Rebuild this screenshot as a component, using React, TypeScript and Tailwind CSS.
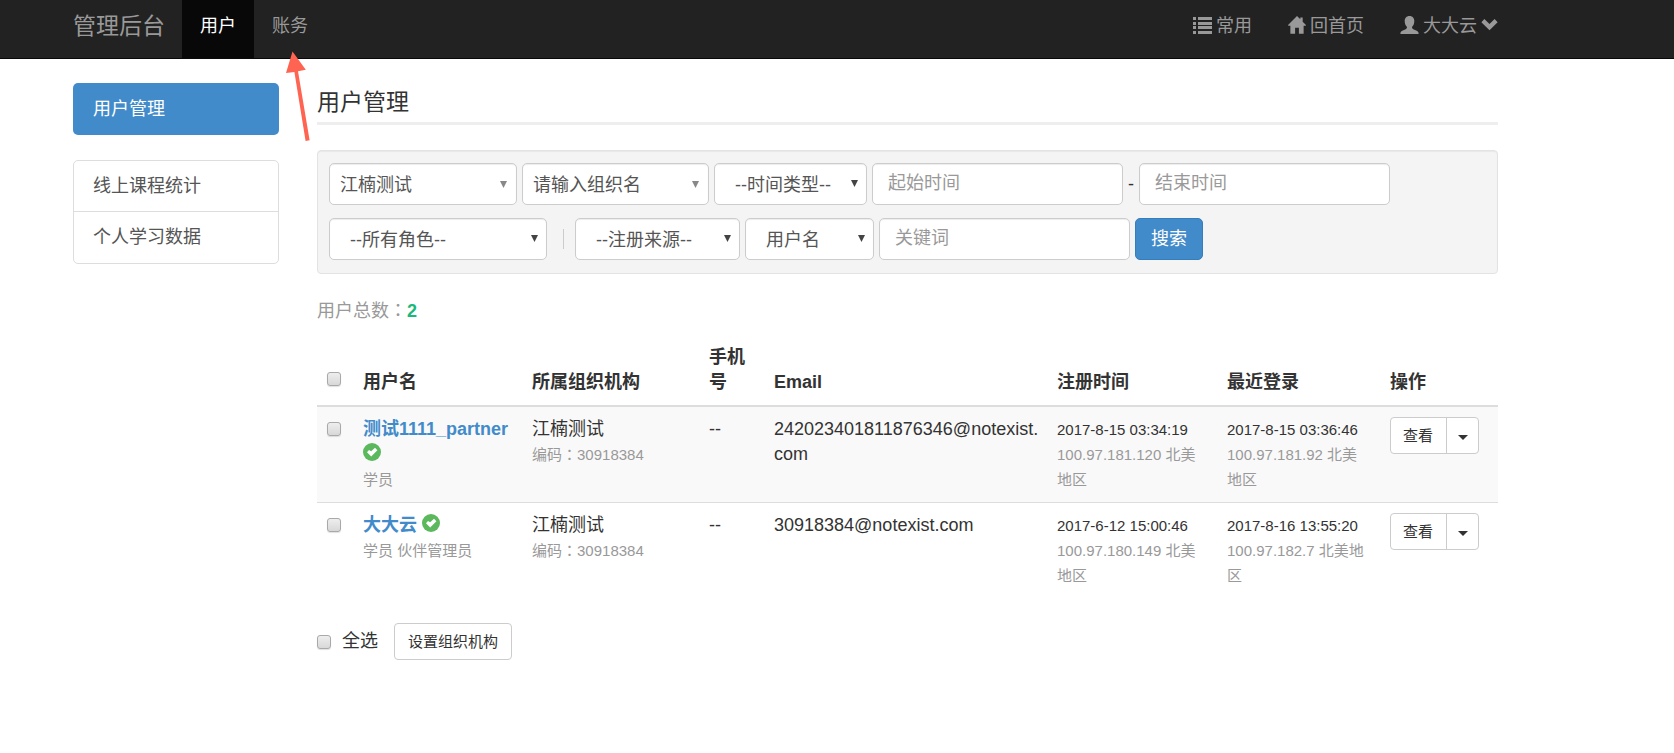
import type { ReactNode } from "react";

const cjk = "font-['Liberation_Sans','Noto_Sans_CJK_SC',sans-serif]";

function ListIcon() {
  return (
    <svg viewBox="0 0 19 17" className="mb-[3px] h-[17px] w-[19px] fill-current" aria-hidden="true">
      <path d="M0 0h3v3H0zM0 5h3v3H0zM0 9h3v3H0zM0 14h3v3H0zM5 0h14v3H5zM5 5h14v3H5zM5 9h14v3H5zM5 14h14v3H5z" />
    </svg>
  );
}

function HomeIcon() {
  return (
    <svg viewBox="0 0 19 19" className="mb-1 h-[18px] w-[18px] fill-current" aria-hidden="true">
      <path d="M9.500 0 13 3.500V1.500h2.500V6L19 9.600q0 .6-.6.6H16.500V18.800h-5V12.500h-4v6.300h-5v-8.600H.6q-.6 0-.6-.6z" />
    </svg>
  );
}

function UserIcon() {
  return (
    <svg viewBox="0 0 19 18" className="mb-1 h-[18px] w-[19px] fill-current" aria-hidden="true">
      <path d="M9.500 0C12.600 0 14.300 2.200 14.300 5c0 2.500-.8 4.700-2.300 6 0 1.300.6 2 1.800 2.500 2.600 1.100 4.700 2 4.900 3.700q.1.800-.7.800H1q-.8 0-.7-.8c.2-1.700 2.300-2.600 4.900-3.700C6.400 13 7 12.300 7 11 5.500 9.700 4.700 7.500 4.700 5 4.700 2.200 6.400 0 9.500 0z" />
    </svg>
  );
}

function ChevronIcon() {
  return (
    <svg viewBox="0 0 18 13" className="mb-1 h-[13px] w-[17px] fill-current" aria-hidden="true">
      <path d="M3.600.8 9 6.100 14.400.8l3.200 3.300L9 12.500.4 4.100z" />
    </svg>
  );
}

function VerifiedIcon() {
  return (
    <svg
      viewBox="0 0 18 18"
      className="inline-block h-[18px] w-[18px] align-[-1px]"
      role="img"
      aria-label="已认证"
    >
      <circle cx="9" cy="9" r="9" fill="#5cb85c" />
      <path d="M4 9.200 6 6.900l2.200 1.300L12 4.700l2.400 2.600L8.200 13.600z" fill="#fff" />
    </svg>
  );
}

function NavItem({ active, children }: { active?: boolean; children: ReactNode }) {
  return (
    <li>
      <a
        href="#"
        className={
          active
            ? "flex h-[58px] items-center bg-[#080808] px-[18px] pb-[5px] text-white"
            : "flex h-[58px] items-center gap-1 px-[18px] pb-[5px]"
        }
      >
        {children}
      </a>
    </li>
  );
}

const fieldBase =
  "h-[42px] rounded-[5px] border border-[#ccc] bg-white text-[18px] leading-[25px] text-[#555] shadow-[inset_0_1px_1px_rgba(0,0,0,0.075)]";

function SelectField({
  label,
  value,
  width,
  soft,
}: {
  label: string;
  value: string;
  width: string;
  soft?: boolean;
}) {
  return (
    <div className={`relative ${width}`}>
      <select
        aria-label={label}
        className={`${fieldBase} w-full appearance-none pt-[2px] pr-6 ${soft ? "pl-[10px] text-[#444]" : "pl-[20px]"}`}
      >
        <option>{value}</option>
      </select>
      <svg
        viewBox="0 0 8 8"
        className={`pointer-events-none absolute h-[7px] w-[7px] ${soft ? "top-[18px] right-[10px] fill-[#888]" : "top-[17px] right-[9px] fill-[#444]"}`}
        aria-hidden="true"
      >
        <path d="M0 0h8L4 8z" />
      </svg>
    </div>
  );
}

function TextField({ placeholder }: { placeholder: string }) {
  return (
    <input
      type="text"
      aria-label={placeholder}
      placeholder={placeholder}
      className={`${fieldBase} w-[251px] px-[15px] pb-[2px] placeholder:text-[#999]`}
    />
  );
}

function Checkbox({ label, id }: { label?: string; id?: string }) {
  return (
    <input
      type="checkbox"
      id={id}
      aria-label={label}
      className="block h-[14px] w-[14px] shrink-0 appearance-none rounded-[3px] border border-[#a9a9a9] bg-linear-to-b from-[#eee] to-[#d8d8d8] shadow-[0_1px_1px_rgba(0,0,0,0.12)] checked:bg-[#428bca]"
    />
  );
}

function Colon() {
  return <span className="font-['Noto_Sans_CJK_TC',sans-serif] leading-none">：</span>;
}

type User = {
  name: string;
  roles: string;
  email: string;
  created: string;
  createdFrom: string;
  login: string;
  loginFrom: string;
};

const users: User[] = [
  {
    name: "测试1111_partner",
    roles: "学员",
    email: "242023401811876346@notexist.com",
    created: "2017-8-15 03:34:19",
    createdFrom: "100.97.181.120 北美地区",
    login: "2017-8-15 03:36:46",
    loginFrom: "100.97.181.92 北美地区",
  },
  {
    name: "大大云",
    roles: "学员 伙伴管理员",
    email: "30918384@notexist.com",
    created: "2017-6-12 15:00:46",
    createdFrom: "100.97.180.149 北美地区",
    login: "2017-8-16 13:55:20",
    loginFrom: "100.97.182.7 北美地区",
  },
];

const cell = "py-[10px] pl-[10px] pr-[8px] align-top";
const muted = "text-[15px] text-[#999]";

function UserRow({ user }: { user: User }) {
  return (
    <tr className="border-t border-[#ddd] odd:bg-[#f9f9f9] first:border-t-2">
      <td className="py-[15px] pl-[10px] align-top">
        <Checkbox label={`选择 ${user.name}`} />
      </td>
      <td className={cell}>
        <a href="#" className="font-bold text-[#428bca]">
          {user.name}
        </a>{" "}
        <VerifiedIcon />
        <div className={muted}>{user.roles}</div>
      </td>
      <td className={cell}>
        <div>江楠测试</div>
        <div className={muted}>
          编码
          <Colon />
          30918384
        </div>
      </td>
      <td className={cell}>--</td>
      <td className={`${cell} break-all`}>{user.email}</td>
      <td className={cell}>
        <div className="text-[15px]">{user.created}</div>
        <div className={muted}>{user.createdFrom}</div>
      </td>
      <td className={cell}>
        <div className="text-[15px]">{user.login}</div>
        <div className={muted}>{user.loginFrom}</div>
      </td>
      <td className={cell}>
        <div className="inline-flex h-[37px] overflow-hidden rounded-[4px] border border-[#ccc] bg-white align-top text-[15px]">
          <button type="button" className="pr-[13px] pl-[12px]">
            查看
          </button>
          <button
            type="button"
            aria-label="更多操作"
            className="flex w-8 items-center justify-center border-l border-[#ccc] pt-1"
          >
            <svg viewBox="0 0 10 5" className="h-[5px] w-[10px] fill-[#333]" aria-hidden="true">
              <path d="M0 0h10L5 5z" />
            </svg>
          </button>
        </div>
      </td>
    </tr>
  );
}

export default function App() {
  return (
    <div className={`relative min-h-screen bg-white text-[18px] leading-[25px] text-[#333] ${cjk}`}>
      <header className="border-b border-[#080808] bg-[#222] text-[#999]">
        <nav className="ml-[73px] flex max-w-[1443px] justify-between" aria-label="主导航">
          <div className="flex">
            <a href="#" className="mr-[17px] flex h-[58px] items-center pb-[5px] text-[23px]">
              管理后台
            </a>
            <ul className="flex">
              <NavItem active>用户</NavItem>
              <NavItem>账务</NavItem>
            </ul>
          </div>
          <ul className="flex">
            <NavItem>
              <ListIcon />
              常用
            </NavItem>
            <NavItem>
              <HomeIcon />
              回首页
            </NavItem>
            <NavItem>
              <UserIcon />
              大大云
              <ChevronIcon />
            </NavItem>
          </ul>
        </nav>
      </header>

      <div className="ml-[73px] flex max-w-[1425px] items-start gap-[38px] pt-6">
        <aside className="w-[206px] shrink-0 text-[#555]">
          <a
            href="#"
            className="block rounded-[5px] bg-[#428bca] px-5 pt-[14px] pb-[13px] text-white"
          >
            用户管理
          </a>
          <div className="mt-[25px] divide-y divide-[#ddd] rounded-[5px] border border-[#ddd]">
            <a href="#" className="block px-[19px] pt-[13px] pb-[12px]">
              线上课程统计
            </a>
            <a href="#" className="block px-[19px] pt-[13px] pb-[13px]">
              个人学习数据
            </a>
          </div>
        </aside>

        <main className="min-w-0 flex-1">
          <h1 className="border-b-[3px] border-[#eee] pt-[7px] pb-[7px] text-[23px]">用户管理</h1>

          <form className="mt-[25px] flex flex-col gap-[13px] rounded-[4px] border border-[#e3e3e3] bg-[#f4f4f4] px-[11px] pt-[12px] pb-[13px] shadow-[inset_0_1px_1px_rgba(0,0,0,0.05)]">
            <div className="flex items-center gap-[5px]">
              <SelectField label="合作伙伴" value="江楠测试" width="w-[188px]" soft />
              <SelectField label="组织名" value="请输入组织名" width="w-[187px]" soft />
              <SelectField label="时间类型" value="--时间类型--" width="w-[153px]" />
              <TextField placeholder="起始时间" />
              <span>-</span>
              <TextField placeholder="结束时间" />
            </div>
            <div className="flex items-center gap-[5px]">
              <SelectField label="角色" value="--所有角色--" width="w-[218px]" />
              <span className="mr-[6px] ml-[11px] h-5 w-px bg-[#ccc]" />
              <SelectField label="注册来源" value="--注册来源--" width="w-[165px]" />
              <SelectField label="搜索字段" value="用户名" width="w-[129px]" />
              <TextField placeholder="关键词" />
              <button
                type="button"
                className="h-[42px] w-[68px] rounded-[5px] border border-[#357ebd] bg-[#428bca] text-white"
              >
                搜索
              </button>
            </div>
          </form>

          <p className="mt-[25px] text-[#999]">
            用户总数
            <Colon />
            <strong className="text-[#1ab87a]">2</strong>
          </p>

          <table className="mt-[11px] w-full table-fixed border-collapse">
            <colgroup>
              <col className="w-[36px]" />
              <col className="w-[169px]" />
              <col className="w-[177px]" />
              <col className="w-[65px]" />
              <col />
              <col className="w-[170px]" />
              <col className="w-[163px]" />
              <col className="w-[118px]" />
            </colgroup>
            <thead>
              <tr className="text-left align-bottom">
                <th scope="col" className="pb-[19px] pl-[10px]">
                  <Checkbox label="选择全部用户" />
                </th>
                <th scope="col" className="py-[10px] pl-[10px]">用户名</th>
                <th scope="col" className="py-[10px] pl-[10px]">所属组织机构</th>
                <th scope="col" className="py-[10px] pr-[10px] pl-[10px]">手机号</th>
                <th scope="col" className="py-[10px] pl-[10px]">Email</th>
                <th scope="col" className="py-[10px] pl-[10px]">注册时间</th>
                <th scope="col" className="py-[10px] pl-[10px]">最近登录</th>
                <th scope="col" className="py-[10px] pl-[10px]">操作</th>
              </tr>
            </thead>
            <tbody>
              {users.map((user) => (
                <UserRow key={user.name} user={user} />
              ))}
            </tbody>
          </table>

          <div className="mt-[25px] flex items-center">
            <Checkbox id="select-all" />
            <label htmlFor="select-all" className="pl-[11px]">
              全选
            </label>
            <button
              type="button"
              className="ml-4 h-[37px] rounded-[4px] border border-[#ccc] bg-white px-[13px] text-[15px]"
            >
              设置组织机构
            </button>
          </div>
        </main>
      </div>

      <svg
        viewBox="0 0 26 92"
        className="pointer-events-none absolute top-[51px] left-[285px] h-[92px] w-[26px] fill-[#ff6452]"
        aria-hidden="true"
      >
        <path d="M7.500 0.500 20.800 18.800 13 20.200 24.600 89.200 20.600 90 9.400 21 1 22z" />
      </svg>
    </div>
  );
}
